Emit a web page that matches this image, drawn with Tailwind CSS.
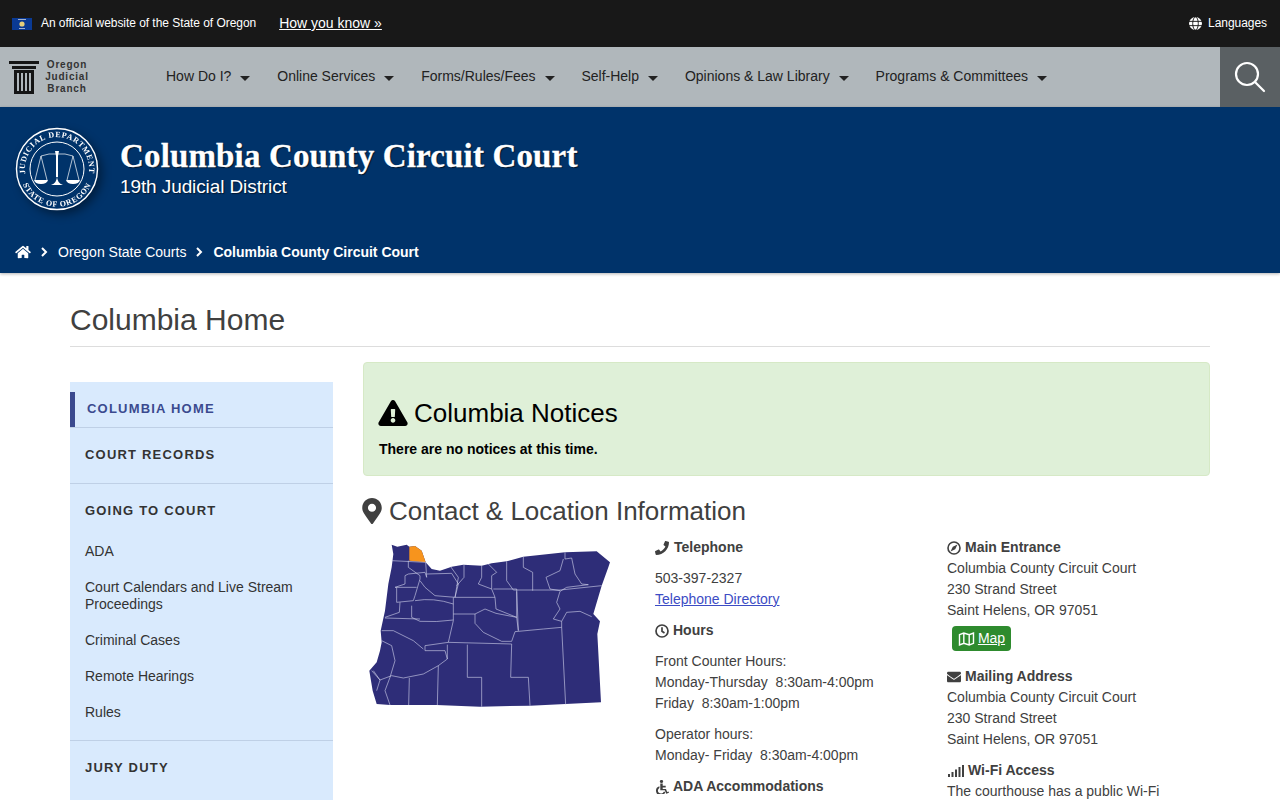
<!DOCTYPE html>
<html lang="en">
<head>
    <meta charset="UTF-8">
    <meta name="viewport" content="width=device-width, initial-scale=1.0">
    <title>Columbia County Circuit Court</title>
    <script src="https://cdn.jsdelivr.net/npm/@tailwindcss/browser@4"></script>
</head>
<body class="h-[800px] overflow-hidden bg-white font-['Liberation_Sans',Arial,sans-serif] text-[14px] leading-[21px] text-[#404040]">

    <!-- official site bar -->
    <div class="flex h-[47px] items-center justify-between bg-[#181818] pl-3 pr-[13px] text-white">
        <div class="flex items-center">
            <svg class="h-3 w-5" viewBox="0 0 20 12"><rect width="20" height="12" fill="#0a3a94"/><circle cx="10" cy="6" r="2.6" fill="#e6cf7a"/><rect x="6" y="1" width="8" height="1" fill="#9fb0d0"/><rect x="7" y="10" width="6" height="1" fill="#9fb0d0"/></svg>
            <span class="ml-[9px] text-[12px] tracking-[-0.05px]">An official website of the State of Oregon</span>
            <a href="#" class="ml-[23px] text-[14px] underline">How you know »</a>
        </div>
        <div class="flex items-center">
            <svg class="ml-px h-[13px] w-[13px]" viewBox="0 0 14 14" fill="none" stroke="#181818" stroke-width="1"><circle cx="7" cy="7" r="7" fill="#fff" stroke="none"/><ellipse cx="7" cy="7" rx="3" ry="7"/><path d="M0 4.7h14M0 9.3h14"/></svg>
            <span class="ml-1.5 text-[12px] tracking-[-0.05px]">Languages</span>
        </div>
    </div>

    <!-- main nav -->
    <div class="flex h-[60px] items-center bg-[#b0b7bb] text-[#222]">
        <div class="flex w-[166px] items-center pl-[9px]">
            <svg class="h-[33px] w-[30px]" viewBox="0 0 30 33" fill="#151515"><rect width="30" height="3"/><rect x="3" y="5" width="24" height="3"/><path d="M5 9h20v24H5zM8 12v18h2V12zm4 0v18h2V12zm4 0v18h2V12zm4 0v18h2V12z" fill-rule="evenodd"/></svg>
            <div class="ml-[5px] w-[46px] text-center text-[10px] font-bold leading-[12px] tracking-[0.8px] text-[#333]">Oregon<br>Judicial<br>Branch</div>
        </div>
        <nav class="flex flex-1 items-center gap-[26.9px] pb-0.5">
            <a class="flex items-center" href="#">How Do I?<i class="ml-[9px] mt-1 border-x-[5px] border-t-[5px] border-x-transparent border-t-[#222]"></i></a>
            <a class="flex items-center" href="#">Online Services<i class="ml-[9px] mt-1 border-x-[5px] border-t-[5px] border-x-transparent border-t-[#222]"></i></a>
            <a class="flex items-center" href="#">Forms/Rules/Fees<i class="ml-[9px] mt-1 border-x-[5px] border-t-[5px] border-x-transparent border-t-[#222]"></i></a>
            <a class="flex items-center" href="#">Self-Help<i class="ml-[9px] mt-1 border-x-[5px] border-t-[5px] border-x-transparent border-t-[#222]"></i></a>
            <a class="flex items-center" href="#">Opinions &amp; Law Library<i class="ml-[9px] mt-1 border-x-[5px] border-t-[5px] border-x-transparent border-t-[#222]"></i></a>
            <a class="flex items-center" href="#">Programs &amp; Committees<i class="ml-[9px] mt-1 border-x-[5px] border-t-[5px] border-x-transparent border-t-[#222]"></i></a>
        </nav>
        <div class="flex h-full w-[60px] items-center justify-center bg-[#5a6063]">
            <svg class="h-[32px] w-[32px]" viewBox="0 0 32 32" fill="none" stroke="#fff" stroke-width="2.2"><circle cx="13" cy="13" r="11"/><path d="M21 21l9 9" stroke-linecap="round"/></svg>
        </div>
    </div>

    <!-- court header -->
    <header class="h-[166px] bg-[#00336a] text-white shadow-[0_1px_3px_#0000004d]">
        <div class="flex h-[126px] pl-[15px] pt-5">
            <svg class="h-[84px] w-[84px] drop-shadow-[4px_4px_5px_#00000066]" viewBox="0 0 84 84">
                <defs>
                    <path id="sealtop" d="M13.700 57A32 32 0 1 1 70.300 57"/>
                    <path id="sealbot" d="M5.900 32A37.500 37.500 0 1 0 78.100 32"/>
                </defs>
                <circle cx="42" cy="42" r="40.500" fill="#00336a" stroke="#fff" stroke-width="1.400"/>
                <circle cx="42" cy="42" r="27" fill="none" stroke="#fff" stroke-width="1"/>
                <text font-family="Liberation Serif" font-size="8" font-weight="bold" fill="#fff" letter-spacing="0.700"><textPath href="#sealtop" startOffset="50%" text-anchor="middle">JUDICIAL DEPARTMENT</textPath></text>
                <text font-family="Liberation Serif" font-size="8" font-weight="bold" fill="#fff" letter-spacing="0.700"><textPath href="#sealbot" startOffset="50%" text-anchor="middle">STATE OF OREGON</textPath></text>
                <g fill="none" stroke="#fff" stroke-width="0.700">
                    <path d="M26 29q8-3 16-2q8-1 16 2"/>
                    <path d="M26 29l-6 24M26 29l6 24M58 29l-6 24M58 29l6 24"/>
                </g>
                <g fill="#fff">
                    <path d="M40 24h4l-1 5v21h-2V29z"/>
                    <path d="M36 58q6-2 6-9q0 7 6 9z"/>
                    <path d="M19 53h14q-1 4-7 4t-7-4zM51 53h14q-1 4-7 4t-7-4z"/>
                </g>
            </svg>
            <div class="ml-[21px] pt-2.5">
                <div class="font-['Liberation_Serif',Georgia,serif] text-[33px] font-bold leading-[38px] tracking-[0.15px] [-webkit-text-stroke:0.3px_#fff] [text-shadow:1px_1px_1px_#000000aa]">Columbia County Circuit Court</div>
                <div class="text-[19px] leading-[23px] tracking-[-0.1px] [text-shadow:1px_1px_1px_#00000088]">19th Judicial District</div>
            </div>
        </div>
        <div class="flex h-[38px] items-center pl-[15px]">
            <svg class="h-[14px] w-4" viewBox="0 0 576 512" fill="#fff"><path d="M280.37 148.26L96 300.11V464a16 16 0 0 0 16 16l112.06-.29a16 16 0 0 0 15.92-16V368a16 16 0 0 1 16-16h64a16 16 0 0 1 16 16v95.64a16 16 0 0 0 16 16.05L464 480a16 16 0 0 0 16-16V300L295.67 148.26a12.19 12.19 0 0 0-15.3 0zM571.6 251.47L488 182.56V44.05a12 12 0 0 0-12-12h-56a12 12 0 0 0-12 12v72.61L318.47 43a48 48 0 0 0-61 0L4.34 251.47a12 12 0 0 0-1.6 16.9l25.5 31A12 12 0 0 0 45.15 301l235.22-193.74a12.19 12.19 0 0 1 15.3 0L530.9 301a12 12 0 0 0 16.9-1.6l25.5-31a12 12 0 0 0-1.7-16.93z"/></svg>
            <svg class="ml-2.5 h-[10px] w-[7px]" viewBox="0 0 7 10" fill="none" stroke="#fff" stroke-width="2"><path d="M1 1l4 4-4 4"/></svg>
            <a class="ml-[10px]" href="#">Oregon State Courts</a>
            <svg class="ml-[10px] h-[10px] w-[7px]" viewBox="0 0 7 10" fill="none" stroke="#fff" stroke-width="2"><path d="M1 1l4 4-4 4"/></svg>
            <span class="ml-[10px] font-bold">Columbia County Circuit Court</span>
        </div>
    </header>

    <main class="mx-[70px] w-[1140px]">
        <h1 class="h-[74px] border-b border-[#ddd] pt-[30px] text-[30px] leading-[33px] text-[#404040]">Columbia Home</h1>

        <div class="mt-[15px] flex gap-[30px]">
            <!-- side menu -->
            <aside class="mt-5 w-[263px] shrink-0 self-start bg-[#d9eafd] pt-2.5 text-[#333]">
                <div class="flex h-[35px] items-center border-l-[5px] border-[#3b4a8f] pb-0.5 pl-3 text-[13px] font-bold tracking-[1.2px] text-[#3b4a8f]">COLUMBIA HOME</div>
                <div class="flex h-[57px] items-center border-y border-[#bfd0e6] pb-0.5 pl-[15px] text-[13px] font-bold tracking-[1.2px]">COURT RECORDS</div>
                <div class="flex h-[53px] items-center pl-[15px] text-[13px] font-bold tracking-[1.2px]">GOING TO COURT</div>
                <ul class="space-y-[19px] border-b border-[#bfd0e6] pb-[19px] pl-[15px] pr-5 pt-1.5 leading-[17px]">
                    <li>ADA</li>
                    <li>Court Calendars and Live Stream Proceedings</li>
                    <li>Criminal Cases</li>
                    <li>Remote Hearings</li>
                    <li>Rules</li>
                </ul>
                <div class="flex h-[53px] items-center pl-[15px] text-[13px] font-bold tracking-[1.2px]">JURY DUTY</div>
                <div class="h-10"></div>
            </aside>

            <div class="w-[847px]">
                <!-- notices -->
                <div class="h-[114px] rounded border border-[#d6e9c6] bg-[#dff0d8] pl-[15px] pt-[35px] text-black">
                    <h2 class="flex h-[30px] items-center text-[26px]">
                        <svg class="-ml-px mr-1.5 h-[26px] w-[30px]" viewBox="0 0 576 512" fill="#000"><path d="M569.517 440.013C587.975 472.007 564.806 512 527.94 512H48.054c-36.937 0-59.999-40.055-41.577-71.987L246.423 23.985c18.467-32.009 64.72-31.951 83.154 0l239.94 416.028zM288 354c-25.405 0-46 20.595-46 46s20.595 46 46 46 46-20.595 46-46-20.595-46-46-46zm-43.673-165.346l7.418 136c.347 6.364 5.609 11.346 11.982 11.346h48.546c6.373 0 11.635-4.982 11.982-11.346l7.418-136c.375-6.874-5.098-12.654-11.982-12.654h-63.383c-6.884 0-12.356 5.78-11.981 12.654z"/></svg>
                        Columbia Notices
                    </h2>
                    <p class="mt-[11px] font-bold">There are no notices at this time.</p>
                </div>

                <h2 class="mt-[21px] flex h-[28px] items-center text-[26px]">
                    <svg class="-ml-px mr-[7px] h-[26px] w-[20px]" viewBox="0 0 384 512" fill="#404040"><path d="M172.268 501.67C26.97 291.031 0 268.413 0 192 0 85.961 85.961 0 192 0s192 85.961 192 192c0 76.413-26.97 99.031-172.268 309.67-9.535 13.774-29.93 13.773-39.464 0zM192 272c44.183 0 80-35.817 80-80s-35.817-80-80-80-80 35.817-80 80 35.817 80 80 80z"/></svg>
                    Contact &amp; Location Information
                </h2>

                <div class="mt-3 grid grid-cols-[292px_292px_1fr]">
                    <!-- county map -->
                    <svg class="-ml-[3px] -mt-[3px] h-[180px] w-[260px]" viewBox="0 0 780 540">
                        <path fill="#2e2d78" d="M95 32L112 38L140 32L148 38L165 36L185 50L197 85L215 105L240 110L275 98L310 92L365 95L395 88L440 82L490 68L615 55L710 52L750 85L745 100L725 155L700 240L720 262L712 300L723 505L510 515L360 518L230 513L90 513L50 510L38 470L28 410L50 385L60 350L65 325L62 290L75 230L85 150L95 100L100 60Z"/>
                        <path fill="#f7941d" d="M148 38L165 36L185 50L197 85L148 80Z"/>
                        <g fill="none" stroke="#d5d6ee" stroke-width="1.800">
                            <path d="M95 80L197 85L200 130L195 115L145 120L135 125V150L105 160"/>
                            <path d="M145 80V100L180 125L180 135L165 185L160 200L110 205"/>
                            <path d="M105 160H170M110 160V205M120 205L118 235L75 250"/>
                            <path d="M200 120L275 118L295 150L285 190L225 185L195 160L180 140"/>
                            <path d="M165 200Q220 190 280 210M155 215L155 250L180 262Q230 265 280 258"/>
                            <path d="M75 252L180 255M280 190V260L265 325L195 335V350L255 350L262 375L235 395L190 420L130 432L95 425L60 438L35 410"/>
                            <path d="M272 98L295 130L285 190H405M312 92V130L290 155"/>
                            <path d="M365 95V130L355 150L395 165V125L410 115L385 90M395 165L405 190L408 225L470 250L475 290"/>
                            <path d="M280 240H345L345 268L370 295L425 322H455L465 293L550 285L605 280"/>
                            <path d="M345 240L375 225L408 238L470 250M265 325L455 330L452 430H505L510 515"/>
                            <path d="M322 332V430H365V518M262 332V375M235 395L232 513M148 432L146 513"/>
                            <path d="M440 82V140L460 168H600L725 155M490 68V100L518 115V170"/>
                            <path d="M400 165H470L475 290M470 172V250"/>
                            <path d="M615 55V75L635 72L645 120L665 150L685 152L620 160L600 172L590 205L600 225L580 255L605 262L620 235L660 232L695 248"/>
                            <path d="M610 75L600 110L558 130L570 165L600 170"/>
                            <path d="M605 262L605 280L617 513"/>
                            <path d="M65 290L100 290L160 320L190 345M65 320L95 335L105 380L90 430L75 470L90 513"/>
                            <path d="M40 410L60 438L50 470"/>
                        </g>
                    </svg>

                    <div>
                        <h4 class="flex items-center font-bold">
                            <svg class="mr-[5px] h-[14px] w-[14px]" viewBox="0 0 512 512" fill="#404040"><path d="M493.4 24.6l-104-24c-11.3-2.6-22.9 3.3-27.5 13.9l-48 112c-4.2 9.8-1.4 21.3 6.9 28l60.6 49.6c-36 76.7-98.9 140.5-177.2 177.2l-49.6-60.6c-6.8-8.3-18.2-11.1-28-6.9l-112 48C3.900 366.500-2 378.100.6 389.400l24 104C27.100 504.200 36.700 512 48 512c256.100 0 464-207.500 464-464 0-11.200-7.700-20.900-18.600-23.400z"/></svg>
                            Telephone
                        </h4>
                        <p class="mt-2.5">503-397-2327<br><a href="#" class="text-[#3c4cc4] underline">Telephone Directory</a></p>
                        <h4 class="mt-2.5 flex items-center font-bold">
                            <svg class="mr-1 h-[14px] w-[14px]" viewBox="0 0 14 14" fill="none" stroke="#404040" stroke-width="1.700"><circle cx="7" cy="7" r="6"/><path d="M7 3.200V7.300L9.500 9"/></svg>
                            Hours
                        </h4>
                        <p class="mt-2.5 whitespace-pre">Front Counter Hours:
Monday-Thursday  8:30am-4:00pm
Friday  8:30am-1:00pm</p>
                        <p class="mt-2.5 whitespace-pre">Operator hours:
Monday- Friday  8:30am-4:00pm</p>
                        <h4 class="mt-2.5 flex items-center font-bold">
                            <svg class="mr-1 h-[14px] w-[14px]" viewBox="0 0 14 14" fill="#404040"><circle cx="6.500" cy="1.500" r="1.600"/><path d="M5.300 3.500h2.400v2.300h3v1.800H7.700v1.400h3.300L12.200 12l1.300-.5.500 1.300-2.800 1-1.400-3.500H5.300z"/><path d="M4.400 6.200v1.800a3 3 0 1 0 4.300 3.700h1.600A4.700 4.700 0 1 1 4.400 6.200z"/></svg>
                            ADA Accommodations
                        </h4>
                    </div>

                    <div>
                        <h4 class="flex items-center font-bold">
                            <svg class="mr-1 h-[14px] w-[14px]" viewBox="0 0 14 14" fill="none" stroke="#404040" stroke-width="1.600"><circle cx="7" cy="7" r="6"/><path d="M10.500 3.500L8.200 8.200L3.500 10.500L5.800 5.800Z" fill="#404040" stroke="none"/></svg>
                            Main Entrance
                        </h4>
                        <p>Columbia County Circuit Court<br>230 Strand Street<br>Saint Helens, OR 97051</p>
                        <a href="#" class="ml-[5px] mt-[5px] flex h-[25px] w-[59px] items-center justify-center rounded bg-[#2e8b2e] text-white underline">
                            <svg class="mr-[3px] h-[14px] w-[17px]" viewBox="0 0 15 13" fill="none" stroke="#fff" stroke-width="1.300"><path d="M1 2.500L5 1l5 1.500L14 1v9.500L10 12 5 10.500 1 12zM5 1v9.500M10 2.500V12"/></svg>
                            Map
                        </a>
                        <h4 class="mt-[15px] flex items-center font-bold">
                            <svg class="mr-1 h-[14px] w-[14px]" viewBox="0 0 512 512" fill="#404040"><path d="M502.3 190.800c3.900-3.100 9.700-.2 9.700 4.700V400c0 26.500-21.500 48-48 48H48c-26.500 0-48-21.500-48-48V195.600c0-5 5.700-7.800 9.700-4.700 22.400 17.400 52.100 39.500 154.100 113.600 21.100 15.400 56.700 47.800 92.200 47.600 35.700.3 72-32.800 92.300-47.600 102-74.100 131.600-96.300 154-113.700zM256 320c23.200.4 56.600-29.200 73.400-41.400 132.700-96.300 142.800-104.700 173.400-128.700 5.800-4.500 9.200-11.500 9.200-18.900v-19c0-26.500-21.500-48-48-48H48C21.500 64 0 85.500 0 112v19c0 7.400 3.400 14.300 9.200 18.900 30.600 23.900 40.700 32.400 173.400 128.700 16.800 12.200 50.200 41.800 73.400 41.400z"/></svg>
                            Mailing Address
                        </h4>
                        <p>Columbia County Circuit Court<br>230 Strand Street<br>Saint Helens, OR 97051</p>
                        <h4 class="mt-2.5 flex items-center font-bold">
                            <svg class="mr-1 h-[14px] w-[17px]" viewBox="0 0 17 14" fill="#404040"><rect x="1" y="10" width="2" height="3"/><rect x="4.500" y="8" width="2" height="5"/><rect x="8" y="5.500" width="2" height="7.500"/><rect x="11.500" y="3" width="2" height="10"/><rect x="15" y="1" width="2" height="12"/></svg>
                            Wi-Fi Access
                        </h4>
                        <p>The courthouse has a public Wi-Fi</p>
                    </div>
                </div>
            </div>
        </div>
    </main>
</body>
</html>
